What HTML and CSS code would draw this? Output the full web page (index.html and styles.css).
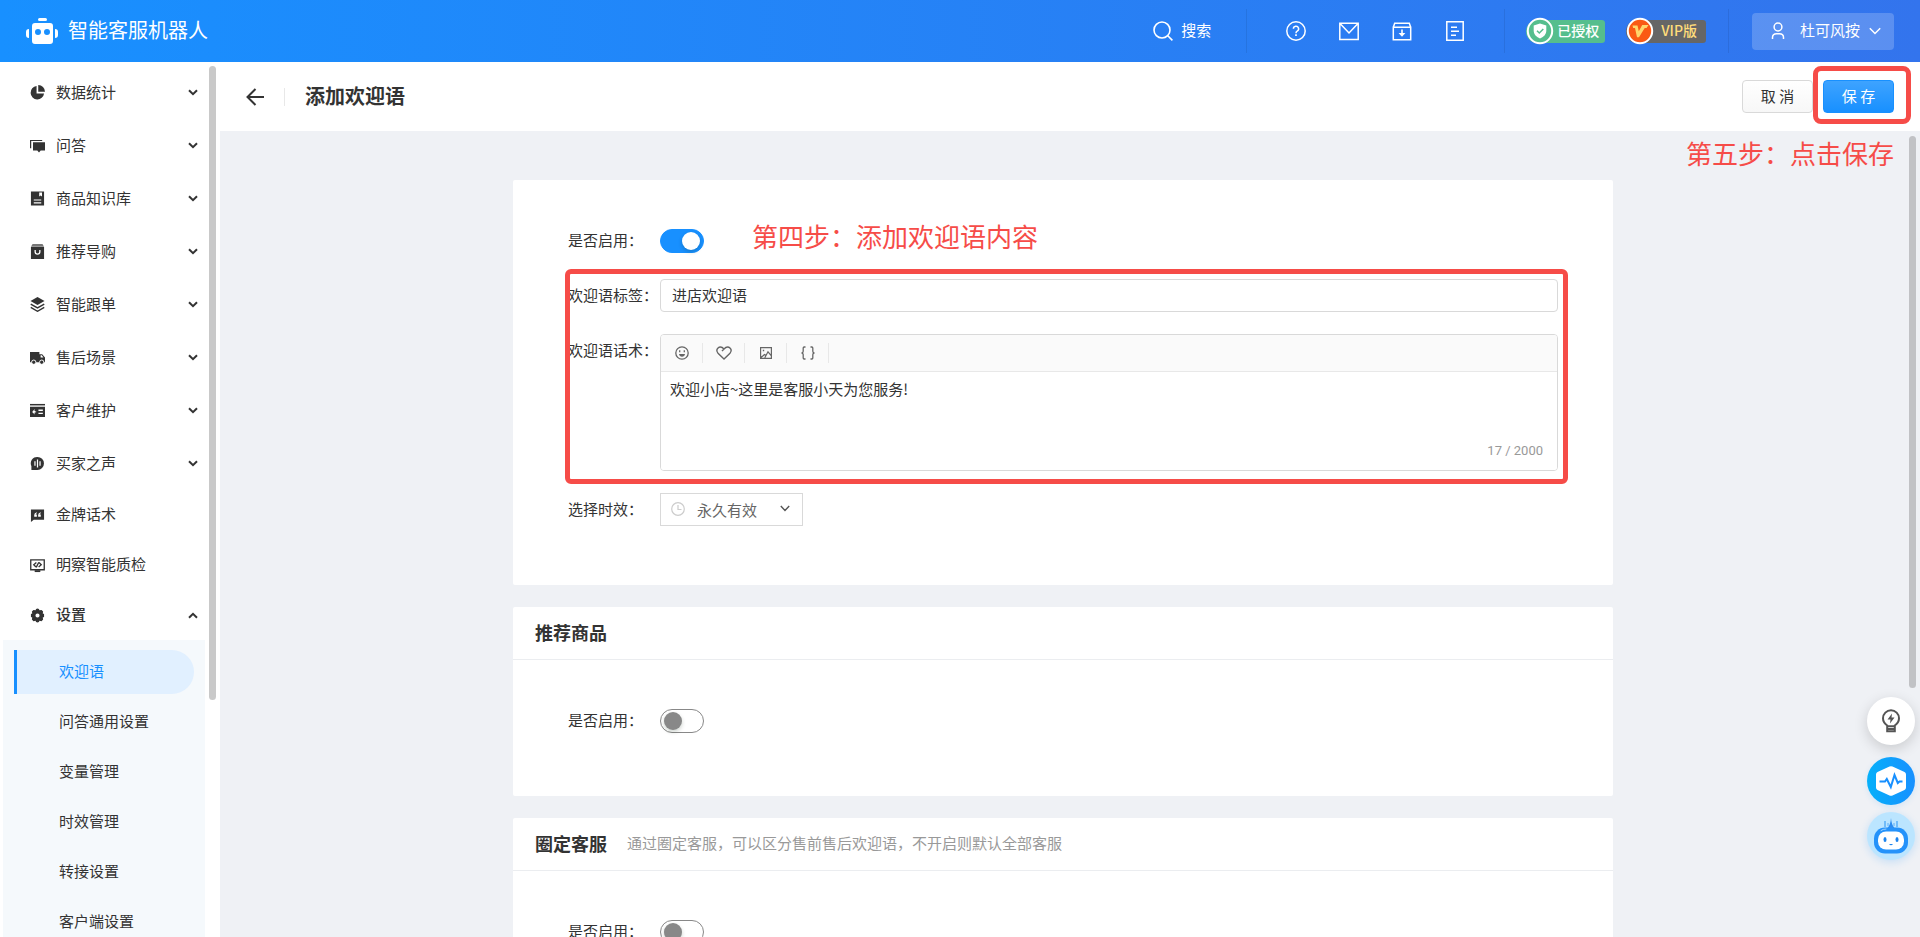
FILE: index.html
```html
<!DOCTYPE html>
<html lang="zh-CN">
<head>
<meta charset="utf-8">
<title>智能客服机器人</title>
<link rel="stylesheet" href="styles.css">
</head>
<body>
<header class="topbar">
  <a class="brand" href="#">
    <svg width="32" height="28" viewBox="0 0 32 28" fill="#fff"><rect x="12" y="1" width="9" height="3" rx="1.5"/><path fill-rule="evenodd" d="M9 6h15q3 0 3 3v15q0 3-3 3H9q-3 0-3-3V9q0-3 3-3zM12 12a3 3 0 1 0 0 6 3 3 0 0 0 0-6zM21 12a3 3 0 1 0 0 6 3 3 0 0 0 0-6z"/><path d="M3 12v9q-3 0-3-3v-3q0-3 3-3zM29 12v9q3 0 3-3v-3q0-3-3-3z"/></svg>
    <span>智能客服机器人</span>
  </a>
  <button class="search" type="button">
    <svg width="20" height="20" viewBox="0 0 20 20" fill="none" stroke="#fff" stroke-width="1.6"><circle cx="9" cy="9" r="8"/><path d="M14.8 14.8l4.6 4.6"/></svg>
    <span>搜索</span>
  </button>
  <nav class="tools" aria-label="工具">
    <button type="button" aria-label="帮助"><svg width="20" height="20" viewBox="0 0 20 20" fill="none" stroke="#fff" stroke-width="1.5"><circle cx="10" cy="10" r="9.2"/><path d="M7.4 7.8a2.6 2.6 0 1 1 3.8 2.3q-1.2.6-1.2 2.1"/><path d="M10 13.3v1.7" stroke-width="1.7"/></svg></button>
    <button type="button" aria-label="消息"><svg width="20" height="20" viewBox="0 0 20 20" fill="none" stroke="#fff" stroke-width="1.5"><path d="M.8 2.2h18.400v16.400H.8zM1.500 3l8.500 9 8.500-9"/></svg></button>
    <button type="button" aria-label="下载"><svg width="20" height="20" viewBox="0 0 20 20" fill="none" stroke="#fff" stroke-width="1.5"><path d="M1.300 6.200h17.400v12.600H1.300zM1.300 6.200l1.400-4h14.600l1.400 4"/><path d="M10 8.500v4.500" stroke-width="1.600"/><path d="M6.600 12h6.800L10 15.800z" fill="#fff" stroke="none"/></svg></button>
    <button type="button" aria-label="文档"><svg width="20" height="20" viewBox="0 0 20 20" fill="none" stroke="#fff" stroke-width="1.500"><path d="M1.800.8h16.400v18.400H1.800zM6 6.200h6M6 10.200h8M6 14.200h5"/></svg></button>
  </nav>
  <div class="badges">
    <span class="badge badge-auth"><svg width="28" height="28" viewBox="0 0 28 28"><circle cx="14" cy="14" r="12.200" fill="#55be8d" stroke="#fff" stroke-width="2"/><path d="M14 6.500l6.300 2v5.600q0 4.800-6.300 7.400-6.300-2.600-6.300-7.400V8.500z" fill="#fff"/><path d="M11 13.700l2.300 2.300 4-4" fill="none" stroke="#55be8d" stroke-width="1.500"/></svg><span>已授权</span></span>
    <span class="badge badge-vip"><svg width="28" height="28" viewBox="0 0 28 28"><circle cx="14" cy="14" r="12.200" fill="#fa5a14" stroke="#fff" stroke-width="2"/><path d="M6.500 8.500h5l1.300 5.800L16.200 8h6.300l-2 3h-1.800L13 20.200h-2L9 11H7.200z" fill="#ffd66b"/></svg><span>VIP版</span></span>
  </div>
  <button class="user" type="button">
    <svg width="14" height="18" viewBox="0 0 14 18" fill="none" stroke="#fff" stroke-width="1.500"><circle cx="7" cy="5" r="3.900"/><path d="M1.500 17v-1.500q0-3.800 4-3.800h3q4 0 4 3.800V17"/></svg>
    <span>杜可风按</span>
    <svg width="12" height="8" viewBox="0 0 12 8" fill="none" stroke="#fff" stroke-width="1.500"><path d="M.8 1.300L6 6.500l5.200-5.200"/></svg>
  </button>
</header>

<div class="shell">
  <aside class="sidebar">
    <nav class="menu">
      <a class="item" href="#"><svg class="ico" viewBox="0 0 16 16"><path d="M7 1a7.200 7.200 0 1 0 8 8H7z"/><path d="M8.800 0v7.200H16A7.300 7.300 0 0 0 8.800 0z"/></svg><span>数据统计</span><svg class="chev" viewBox="0 0 10 7"><path d="M1 1.200l4 4 4-4"/></svg></a>
      <a class="item" href="#"><svg class="ico" viewBox="0 0 16 16"><path d="M0 2h13v1.300H1.300V11H0z"/><path d="M3.200 4.400H16v9h-4.600l-1.800 2-1.800-2H3.200z"/></svg><span>问答</span><svg class="chev" viewBox="0 0 10 7"><path d="M1 1.200l4 4 4-4"/></svg></a>
      <a class="item" href="#"><svg class="ico" viewBox="0 0 16 16"><path fill-rule="evenodd" d="M1 .5h14v15H1zM9.800 1.500v4.300l1.500-1 1.500 1V1.500zM4 9v1.200h8V9zM4 12v1.200h8V12z"/></svg><span>商品知识库</span><svg class="chev" viewBox="0 0 10 7"><path d="M1 1.200l4 4 4-4"/></svg></a>
      <a class="item" href="#"><svg class="ico" viewBox="0 0 16 16"><path d="M2.700 0h10.600L15 3H1z" fill="#777"/><path fill-rule="evenodd" d="M1 3.200h14V16H1zM4.800 6.500v1.700a3.200 3.200 0 0 0 6.400 0V6.500H9.800v1.700a1.800 1.800 0 0 1-3.600 0V6.500z"/></svg><span>推荐导购</span><svg class="chev" viewBox="0 0 10 7"><path d="M1 1.200l4 4 4-4"/></svg></a>
      <a class="item" href="#"><svg class="ico" viewBox="0 0 16 16"><path d="M8 0l7.500 4.200L8 8.400.5 4.200z"/><path d="M.8 7.500L8 11.700l7.200-4.200M.8 11L8 15.200 15.200 11" fill="none" stroke="#333" stroke-width="1.500"/></svg><span>智能跟单</span><svg class="chev" viewBox="0 0 10 7"><path d="M1 1.200l4 4 4-4"/></svg></a>
      <a class="item" href="#"><svg class="ico" viewBox="0 0 16 16"><path fill-rule="evenodd" d="M0 2h10v2.500h3L16 8v5H0zM11.300 5.700V8h3L12.600 5.700z"/><circle cx="4" cy="13" r="2.300" stroke="#fff"/><circle cx="12.500" cy="13" r="2.300" stroke="#fff"/></svg><span>售后场景</span><svg class="chev" viewBox="0 0 10 7"><path d="M1 1.200l4 4 4-4"/></svg></a>
      <a class="item" href="#"><svg class="ico" viewBox="0 0 16 16"><path d="M0 1h16v1.600H0z"/><path fill-rule="evenodd" d="M0 4h16v11H0zM5 6.500L2.300 9.700 5 12.300l-.3-1.800 2.300-1L4.700 8.300zM9 7v1.400h4.700V7zM9 10.300v1.400h4.700v-1.400z"/></svg><span>客户维护</span><svg class="chev" viewBox="0 0 10 7"><path d="M1 1.200l4 4 4-4"/></svg></a>
      <a class="item" href="#"><svg class="ico" viewBox="0 0 16 16"><path d="M8 1a6.800 6.800 0 1 1 0 13.800H1.500v-4A6.800 6.800 0 0 1 8 1z"/><path d="M5.300 5.500v5M8 3.800v8.400M10.700 5.500v5" stroke="#fff" stroke-width="1.300"/></svg><span>买家之声</span><svg class="chev" viewBox="0 0 10 7"><path d="M1 1.200l4 4 4-4"/></svg></a>
      <a class="item item-leaf" href="#"><svg class="ico" viewBox="0 0 16 16"><path d="M1 1.500h14v11H4L1 15z"/><path d="M7.300 4.500Q4.500 5 4.500 7.500v1.700h2.800V7H6q0-1.200 1.300-1.500zM11.500 4.500Q8.700 5 8.700 7.500v1.700h2.800V7h-1.300q0-1.200 1.300-1.500z" fill="#fff"/></svg><span>金牌话术</span></a>
      <a class="item item-leaf" href="#"><svg class="ico" viewBox="0 0 16 16"><path d="M.8 2h14.400v10.500H.8zM6.800 4.700L4 7.200l2.400 2.400M9.200 9.700L12 7.200 9.600 4.800M9.400 4.500L6.600 10" fill="none" stroke="#333" stroke-width="1.400"/><path d="M5 13h6v2H5z"/></svg><span>明察智能质检</span></a>
      <a class="item item-leaf item-open" href="#"><svg class="ico" viewBox="0 0 16 16"><path fill-rule="evenodd" d="M6.500 1L8 .5 9.500 1l.6 1.400L12.300 2l1.700 1.700-.4 2.200L15 6.500v3l-1.400.6.4 2.200-1.700 1.700-2.200-.4-.6 1.400L8 15.500 6.500 15l-.6-1.400-2.200.4L2 12.300l.4-2.200L1 9.500v-3l1.400-.6L2 3.700 3.700 2l2.200.4zM8 5.800a2.200 2.200 0 1 0 0 4.400 2.200 2.200 0 0 0 0-4.400z"/></svg><span>设置</span><svg class="chev" viewBox="0 0 10 7"><path d="M1 5.800l4-4 4 4"/></svg></a>
      <div class="submenu">
        <a class="sub sub-active" href="#">欢迎语</a>
        <a class="sub" href="#">问答通用设置</a>
        <a class="sub" href="#">变量管理</a>
        <a class="sub" href="#">时效管理</a>
        <a class="sub" href="#">转接设置</a>
        <a class="sub" href="#">客户端设置</a>
      </div>
    </nav>
    <div class="thumb thumb-side"></div>
  </aside>

  <main class="main">
    <div class="pagehead">
      <button class="back" type="button" aria-label="返回"><svg width="18" height="18" viewBox="0 0 18 18" fill="none" stroke="#333" stroke-width="2"><path d="M18 9H1.500M9.500 1L1.500 9l8 8"/></svg></button>
      <h1>添加欢迎语</h1>
      <button class="btn" type="button">取 消</button>
      <div class="save-wrap">
        <button class="btn btn-primary" type="button">保 存</button>
        <div class="mark mark-save"></div>
      </div>
    </div>

    <div class="content">
      <form class="column">
        <section class="card">
          <div class="fields">
            <div class="row">
              <label for="on1">是否启用：</label>
              <input class="switch" id="on1" type="checkbox" checked>
            </div>
            <div class="row">
              <label for="tag">欢迎语标签：</label>
              <input class="text" id="tag" type="text" value="进店欢迎语">
            </div>
            <div class="row row-top">
              <label for="words">欢迎语话术：</label>
              <div class="editor">
                <div class="toolbar">
                  <button type="button" aria-label="表情"><svg width="14" height="14" viewBox="0 0 14 14" fill="none" stroke="#666" stroke-width="1.300"><circle cx="7" cy="7" r="6.200"/><path d="M4.700 4.200v2M9.300 4.200v2"/><path d="M4 8h6q-.5 2.800-3 2.800T4 8z" fill="#666" stroke="none"/></svg></button>
                  <button type="button" aria-label="收藏"><svg width="16" height="14" viewBox="0 0 16 14" fill="none" stroke="#666" stroke-width="1.400"><path d="M8 13L2 7.200Q-.2 4.300 1.800 2.200 4.700-.5 8 2.900q3.300-3.400 6.200-.7 2 2.100-.2 5zM8 2.900L6 5"/></svg></button>
                  <button type="button" aria-label="图片"><svg width="12" height="12" viewBox="0 0 12 12" fill="none" stroke="#666" stroke-width="1.200"><path d="M.6.600h10.800v10.800H.6zM1 10.500l3.500-3 1.500 1M4.800 10.800L8 4.800l3.400 4"/><path d="M2.800 2.800h1.400v1.400H2.800z" fill="#666" stroke="none"/></svg></button>
                  <button type="button" aria-label="变量"><svg width="14" height="14" viewBox="0 0 14 14" fill="none" stroke="#666" stroke-width="1.300"><path d="M4.500 1H3.200Q2.200 1 2.200 2v3.200Q2.200 7 .5 7q1.700 0 1.700 1.800V12q0 1 1 1h1.300M9.500 1h1.300q1 0 1 1v3.200q0 1.800 1.700 1.800-1.700 0-1.700 1.800V12q0 1-1 1H9.500"/></svg></button>
                </div>
                <textarea id="words">欢迎小店~这里是客服小天为您服务!</textarea>
                <span class="count">17 / 2000</span>
              </div>
            </div>
            <div class="row">
              <label for="period">选择时效：</label>
              <div class="pick">
                <svg class="clock" width="14" height="14" viewBox="0 0 14 14" fill="none" stroke="#ccc" stroke-width="1.200"><circle cx="7" cy="7" r="6.300"/><path d="M7 3v4.500h3.500"/></svg>
                <select id="period"><option>永久有效</option></select>
                <svg class="caret" width="10" height="7" viewBox="0 0 10 7" fill="none" stroke="#555" stroke-width="1.400"><path d="M.8 1l4.200 4.500L9.200 1"/></svg>
              </div>
            </div>
          </div>
          <p class="note note-four">第四步：添加欢迎语内容</p>
          <div class="mark mark-fields"></div>
        </section>

        <section class="card">
          <div class="cardhead"><h2>推荐商品</h2></div>
          <div class="fields">
            <div class="row">
              <label for="on2">是否启用：</label>
              <input class="switch" id="on2" type="checkbox">
            </div>
          </div>
        </section>

        <section class="card">
          <div class="cardhead"><h2>圈定客服</h2><p>通过圈定客服，可以区分售前售后欢迎语，不开启则默认全部客服</p></div>
          <div class="fields">
            <div class="row">
              <label for="on3">是否启用：</label>
              <input class="switch" id="on3" type="checkbox">
            </div>
          </div>
        </section>
      </form>
      <p class="note note-five">第五步：点击保存</p>
      <div class="thumb thumb-main"></div>
    </div>
  </main>
</div>

<div class="floats">
  <button class="float float-tip" type="button" aria-label="提示"><svg width="20" height="24" viewBox="0 0 20 24" fill="none" stroke="#555" stroke-width="2"><path d="M6.200 16.500Q2 13.500 2 9.300a8 8 0 0 1 16 0q0 4.200-4.200 7.200v5.700H6.200zM6.200 17.200h7.600M6.200 20h7.600"/><path d="M11 4.500l-4.500 6H9.500L9 14.500l4.500-6H10.500z" fill="#555" stroke="none"/></svg></button>
  <button class="float float-pulse" type="button" aria-label="监控"><svg width="30" height="30" viewBox="0 0 30 30"><path d="M13.500.6q1.500-.8 3 0L28.500 6q1.500.8 1.500 2.500v13q0 1.700-1.500 2.500l-12 5.400q-1.500.8-3 0L1.500 24Q0 23.200 0 21.500v-13Q0 6.800 1.500 6z" fill="#fff"/><path d="M3.500 15.500h5.500l1.800-2.500 4 8 3.700-12 3.300 8 1.700-1.500h3" fill="none" stroke="#1890ff" stroke-width="2"/></svg></button>
  <button class="float float-bot" type="button" aria-label="助手"><svg width="36" height="36" viewBox="0 0 36 36"><path d="M12 3v6M24 3v6" stroke="#5aaef8" stroke-width="1.500"/><path d="M18 0q.5 7 3.500 10h-7Q17.500 7 18 0z" fill="#2b8cf0"/><path d="M15 5v3M21 5v3" stroke="#5aaef8"/><rect x="1" y="9.500" width="34" height="26" rx="11" fill="#2492fa"/><rect x="5" y="13.500" width="26" height="18" rx="8" fill="#fff"/><path d="M8 12.500q2-1.500 5-1.500" stroke="#9fd3ff" fill="none" stroke-linecap="round"/><ellipse cx="12" cy="21.500" rx="1.500" ry="2.500" fill="#1b83ee"/><ellipse cx="24" cy="21.500" rx="1.500" ry="2.500" fill="#1b83ee"/><path d="M16 26q2 2.500 4 0z" fill="#1b83ee"/></svg></button>
</div>
</body>
</html>
```

FILE: styles.css
```css
* { box-sizing: border-box; }

body {
  margin: 0;
  height: 100vh;
  display: flex;
  flex-direction: column;
  overflow: hidden;
  font: 15px/24px "Noto Sans CJK SC", sans-serif;
  color: #333;
  background: #eff1f5;
}

h1, h2, p { margin: 0; }
a { color: inherit; text-decoration: none; }
button, input, select, textarea { font: inherit; color: inherit; }
button { padding: 0; border: 0; background: none; cursor: pointer; }
svg { display: block; flex: none; }

/* top bar */
.topbar {
  flex: none;
  height: 62px;
  padding: 0 26px;
  display: flex;
  align-items: center;
  color: #fff;
  background: linear-gradient(90deg, #1890ff, #3374ed);
}
.topbar span > span,
.topbar a > span,
.topbar button > span { padding-bottom: 2px; }
.brand { display: flex; align-items: center; gap: 10px; margin-right: auto; font-size: 20px; }
.search { display: flex; align-items: center; gap: 8px; padding-right: 35px; }
.tools {
  display: flex;
  align-items: center;
  gap: 33px;
  height: 44px;
  padding: 0 39px;
  border-left: 1px solid rgba(0, 0, 0, .08);
  border-right: 1px solid rgba(0, 0, 0, .08);
}
.badges {
  display: flex;
  align-items: center;
  gap: 21px;
  height: 44px;
  padding: 0 22px 0 21px;
  border-right: 1px solid rgba(0, 0, 0, .08);
}
.badge {
  display: flex;
  align-items: center;
  gap: 3px;
  height: 23px;
  padding-right: 6px;
  border-radius: 14px 4px 4px 14px;
  font-size: 14px;
  font-weight: 500;
}
.badge-auth { background: #55be8d; }
.badge-vip { gap: 7px; padding-right: 9px; background: #666; color: #ffdc7a; }
.user {
  display: flex;
  align-items: center;
  height: 37px;
  margin-left: 23px;
  padding: 0 13px 0 19px;
  border-radius: 4px;
  background: rgba(255, 255, 255, .2);
}
.user span { margin: 0 9px 0 15px; }

/* side menu */
.shell { flex: 1; min-height: 0; display: flex; }
.sidebar {
  position: relative;
  z-index: 1;
  flex: none;
  width: 220px;
  overflow: hidden;
  padding-top: 4px;
  background: #fff;
}
.item {
  display: flex;
  align-items: center;
  height: 53px;
  padding: 0 22px 0 30px;
  white-space: nowrap;
}
.item span { flex: 1; margin-left: 11px; padding-bottom: 2px; }
.item-leaf { height: 50px; }
.item-open { font-weight: 500; }
.ico { width: 15px; height: 15px; fill: #333; }
.chev { width: 10px; height: 7px; fill: none; stroke: #333; stroke-width: 2; }
.submenu {
  display: flex;
  flex-direction: column;
  gap: 6px;
  margin: 0 15px 0 3px;
  padding: 10px 11px 20px;
  background: #f5f9fc;
}
.sub {
  height: 44px;
  padding: 0 0 2px 42px;
  border-left: 3px solid transparent;
  border-radius: 0 22px 22px 0;
  line-height: 42px;
  white-space: nowrap;
}
.sub-active { border-left-color: #1890ff; background: #e1f0ff; color: #1890ff; }

.thumb {
  position: absolute;
  right: 4px;
  width: 7px;
  border-radius: 4px;
  background: #c9c9c9;
}
.thumb-side { top: 4px; height: 72.5%; }
.thumb-main { top: 5px; height: 68.5%; background: #c1c2c5; }

/* page head */
.main { flex: 1; min-width: 0; display: flex; flex-direction: column; }
.pagehead {
  flex: none;
  display: flex;
  align-items: center;
  height: 69px;
  padding: 0 26px;
  background: #fff;
}
.back { padding-right: 20px; border-right: 1px solid #e8e8e8; }
.pagehead h1 { flex: 1; margin-left: 20px; padding-bottom: 2px; font-size: 20px; font-weight: 700; }
.btn {
  width: 71px;
  height: 33px;
  padding-bottom: 2px;
  border: 1px solid #d9d9d9;
  border-radius: 4px;
  background: linear-gradient(#fff, #f7f7f7);
}
.btn-primary {
  border-color: #1890ff;
  background: linear-gradient(#3ea3ff, #1890ff);
  color: #fff;
}
.save-wrap { position: relative; margin-left: 10px; }
.mark {
  position: absolute;
  border: 5px solid #f64c48;
  border-radius: 8px;
  pointer-events: none;
}
.mark-save { inset: -14px -17px -11px -10px; }

/* cards */
.content {
  position: relative;
  flex: 1;
  min-height: 0;
  overflow: hidden;
  padding: 49px 14px 0 0;
}
.column {
  display: flex;
  flex-direction: column;
  gap: 22px;
  max-width: 1100px;
  margin: 0 auto;
}
.card { position: relative; border-radius: 2px; background: #fff; }
.cardhead {
  display: flex;
  align-items: center;
  gap: 20px;
  height: 53px;
  padding: 0 22px 2px;
  border-bottom: 1px solid #ebedf0;
}
.cardhead h2 { font-size: 18px; font-weight: 700; }
.cardhead p { color: #999; }
.fields { display: flex; flex-direction: column; gap: 22px; padding: 44px 55px 59px; }
.row { display: grid; grid-template-columns: 92px 1fr; align-items: center; }
.row label { padding-bottom: 2px; line-height: 31px; white-space: nowrap; }
.row-top { align-items: start; }

.switch {
  appearance: none;
  display: flex;
  align-items: center;
  width: 44px;
  height: 24px;
  margin: 0;
  padding: 0 3px;
  border: 1px solid #888;
  border-radius: 12px;
  background: #fff;
}
.switch::before {
  content: "";
  width: 18px;
  height: 18px;
  border-radius: 50%;
  background: #888;
  box-shadow: 0 2px 4px rgba(0, 35, 11, .2);
}
.switch:checked { justify-content: flex-end; border-color: #1890ff; background: #1890ff; }
.switch:checked::before { background: #fff; }

.text {
  width: 100%;
  height: 33px;
  padding: 0 11px 2px;
  border: 1px solid #d9d9d9;
  border-radius: 4px;
  background: #fff;
}
.editor {
  position: relative;
  display: flex;
  flex-direction: column;
  height: 137px;
  border: 1px solid #d9d9d9;
  border-radius: 4px;
  overflow: hidden;
}
.toolbar {
  flex: none;
  display: flex;
  align-items: center;
  height: 37px;
  border-bottom: 1px solid #e8e8e8;
  background: #fafafa;
}
.toolbar button {
  display: flex;
  align-items: center;
  justify-content: center;
  width: 42px;
  height: 20px;
  border-right: 1px solid #e8e8e8;
}
.editor textarea {
  flex: 1;
  padding: 5px 9px;
  border: 0;
  resize: none;
  background: #fff;
}
.count {
  position: absolute;
  right: 14px;
  bottom: 7px;
  font: 13px/24px Roboto, sans-serif;
  color: #999;
}
.pick { position: relative; width: 143px; }
.pick select {
  appearance: none;
  display: block;
  width: 100%;
  height: 33px;
  padding: 0 30px 0 36px;
  border: 1px solid #d9d9d9;
  border-radius: 0;
  background: #fff;
  color: #666;
}
.clock { position: absolute; left: 11px; top: 9px; }
.caret { position: absolute; right: 13px; top: 12px; }

/* step annotations */
.note {
  position: absolute;
  font-size: 26px;
  line-height: 36px;
  color: #f64c48;
  white-space: nowrap;
}
.note-four { left: 239px; top: 38px; }
.note-five { right: 26px; top: 4px; }
.mark-fields { inset: 89px 45px 101px 52px; border-radius: 6px; }

/* floating buttons */
.floats {
  position: fixed;
  right: 5px;
  bottom: 77px;
  z-index: 2;
  display: flex;
  flex-direction: column;
  gap: 7px;
}
.float {
  display: flex;
  align-items: center;
  justify-content: center;
  width: 48px;
  height: 48px;
  border-radius: 50%;
}
.float-tip { margin-bottom: 5px; background: #fff; box-shadow: 0 4px 14px rgba(0, 0, 0, .16); }
.float-pulse { background: linear-gradient(90deg, #05b0fa, #1890ff); box-shadow: 0 2px 6px rgba(24, 144, 255, .12); }
.float-bot { background: #bbe5ff; box-shadow: 0 2px 8px rgba(24, 144, 255, .2); }
```
